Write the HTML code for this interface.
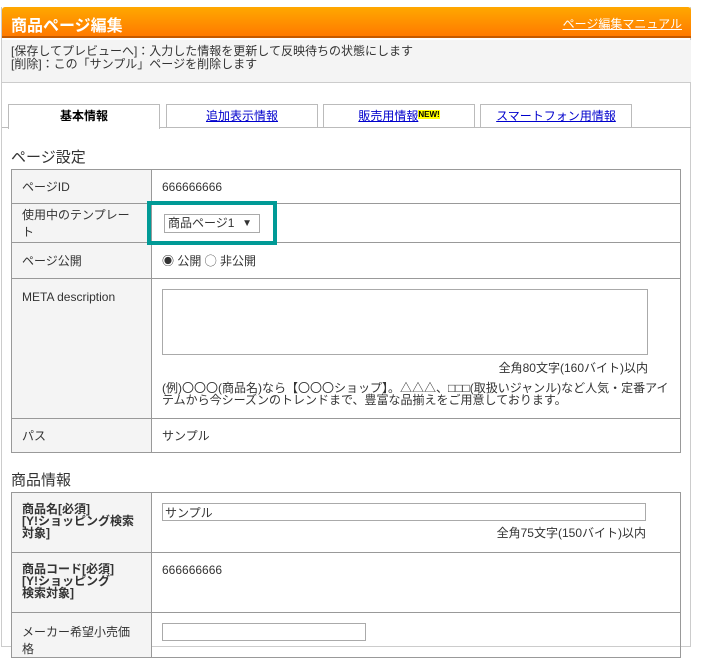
<!DOCTYPE html>
<html><head><meta charset="utf-8"><style>
*{box-sizing:border-box;margin:0;padding:0}
body{width:710px;height:633px;overflow:hidden;background:#fff;font-family:"Liberation Sans","Noto Sans CJK JP",sans-serif;font-size:12px;color:#333;position:relative}
.wrap{position:absolute;left:1px;top:7px;width:690px;height:640px;border:1px solid #ccc;border-top:none}
.hdr{position:absolute;left:0;top:0;width:689px;height:31px;background:linear-gradient(#ffa800,#ff7a00);border-bottom:2px solid #c55a00;border-radius:3px 3px 0 0}
.hdr h1{position:absolute;left:9px;top:5px;color:#fff;font-size:16px;font-weight:bold}
.hdr a{position:absolute;right:9px;top:8px;color:#fff;font-size:12px;text-decoration:underline}
.info{position:absolute;left:0;top:33px;width:689px;height:43px;background:#f4f4f4;border-bottom:1px solid #ccc;padding:5px 9px;line-height:13px;font-size:12px}
.tabs{position:absolute;left:0;top:97px;width:689px;height:24px;border-bottom:1px solid #bbb}
.tab{position:absolute;top:0;height:24px;border:1px solid #bbb;background:#fff;text-align:center;line-height:22px;color:#00c;text-decoration:underline}
.tab.on{height:25px;border-bottom:none;color:#000;font-weight:bold;text-decoration:none}
.new{font-size:8px;font-weight:bold;color:#cc0;background:#ff0;color:#000;text-decoration:none;display:inline-block;line-height:9px;vertical-align:top;margin-top:5px}
h2{position:absolute;left:11px;font-size:15px;font-weight:normal;color:#333}
table{position:absolute;left:11px;width:670px;border-collapse:collapse}
td{border:1px solid #999;vertical-align:top;padding:0 10px}
td.l{width:140px;background:#f4f4f4}
.inp{border:1px solid #aaa;background:#fff}
.b{font-weight:bold;line-height:12px;font-size:12px}
</style></head><body>
<div class="wrap">
<div class="hdr"><h1>商品ページ編集</h1><a>ページ編集マニュアル</a></div>
<div class="info">[保存してプレビューへ]：入力した情報を更新して反映待ちの状態にします<br>[削除]：この「サンプル」ページを削除します</div>
<div class="tabs">
<div class="tab on" style="left:6px;width:152px">基本情報</div>
<div class="tab" style="left:164px;width:152px">追加表示情報</div>
<div class="tab" style="left:321px;width:152px">販売用情報<span class="new">NEW!</span></div>
<div class="tab" style="left:478px;width:152px">スマートフォン用情報</div>
</div>
</div>
<h2 style="top:146px">ページ設定</h2>
<table style="top:169px">
<tr style="height:34px"><td class="l" style="vertical-align:middle">ページID</td><td style="vertical-align:middle">666666666</td></tr>
<tr style="height:39px"><td class="l" style="vertical-align:middle">使用中のテンプレート</td><td style="vertical-align:middle"><span class="inp" style="display:inline-block;width:96px;height:19px;line-height:17px;padding-left:3px;position:relative;left:2px">商品ページ1<span style="position:absolute;right:7px;font-size:10px">▼</span></span></td></tr>
<tr style="height:36px"><td class="l" style="vertical-align:middle">ページ公開</td><td style="vertical-align:middle">◉ 公開 ◯ 非公開</td></tr>
<tr style="height:140px"><td class="l" style="padding-top:11px">META description</td><td><div class="inp" style="width:486px;height:66px;margin-top:10px"></div><div style="text-align:right;width:486px;margin-top:4px">全角80文字(160バイト)以内</div><div style="line-height:12px;margin-top:6px">(例)〇〇〇(商品名)なら【〇〇〇ショップ】。△△△、□□□(取扱いジャンル)など人気・定番アイテムから今シーズンのトレンドまで、豊富な品揃えをご用意しております。</div></td></tr>
<tr style="height:34px"><td class="l" style="vertical-align:middle">パス</td><td style="vertical-align:middle">サンプル</td></tr>
</table>
<div style="position:absolute;left:147px;top:201px;width:130px;height:44px;border:4px solid #009a96"></div>
<h2 style="top:469px">商品情報</h2>
<table style="top:492px">
<tr style="height:60px"><td class="l b" style="padding-top:10px">商品名[必須]<br>[Y!ショッピング検索対象]</td><td><div class="inp" style="width:484px;height:18px;margin-top:10px;padding-left:2px">サンプル</div><div style="text-align:right;width:484px;margin-top:3px">全角75文字(150バイト)以内</div></td></tr>
<tr style="height:60px"><td class="l b" style="padding-top:10px">商品コード[必須]<br>[Y!ショッピング<br>検索対象]</td><td style="padding-top:10px">666666666</td></tr>
<tr style="height:40px"><td class="l" style="padding-top:10px">メーカー希望小売価格</td><td><div class="inp" style="width:204px;height:18px;margin-top:10px"></div></td></tr>
</table>
</body></html>
